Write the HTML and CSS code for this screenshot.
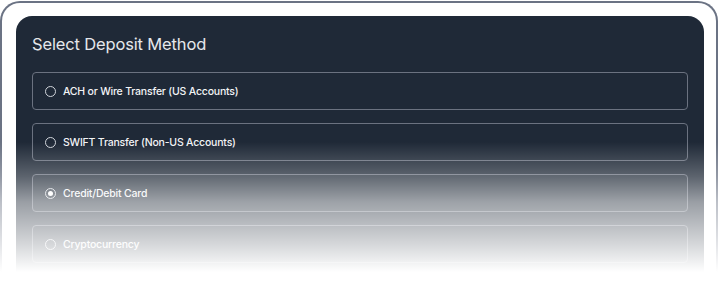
FILE: index.html
```html
<!DOCTYPE html>
<html>
<head>
<meta charset="utf-8">
<link rel="stylesheet" href="styles.css">
</head>
<body>
<div class="frame">
  <div class="card">
    <h2 class="title">Select Deposit Method</h2>
    <div class="options">
      <label class="option"><span class="radio"></span><span class="label">ACH or Wire Transfer (US Accounts)</span></label>
      <label class="option"><span class="radio"></span><span class="label">SWIFT Transfer (Non-US Accounts)</span></label>
      <label class="option selected"><span class="radio"></span><span class="label">Credit/Debit Card</span></label>
      <label class="option"><span class="radio"></span><span class="label">Cryptocurrency</span></label>
    </div>
  </div>
</div>
<div class="fade"></div>
</body>
</html>
```

FILE: styles.css
```css
html, body {
  margin: 0;
  padding: 0;
  background: #ffffff;
  width: 720px;
  height: 296px;
  overflow: hidden;
  font-family: Inter, "Liberation Sans", sans-serif;
}
.frame {
  margin-top: 1px;
  width: 718px;
  height: 294px;
  border: 2px solid #6b7384;
  border-bottom: none;
  border-radius: 20px 20px 0 0;
  padding: 13px 0 0 14px;
  box-sizing: border-box;
  background: #ffffff;
}
.card {
  width: 688px;
  height: 281px;
  background: #1f2937;
  border-radius: 16px 16px 0 0;
  padding: 16px 16px 0 16px;
  box-sizing: border-box;
}
.title {
  margin: 0;
  font-size: 16.5px;
  line-height: 25px;
  font-weight: 400;
  color: #e5e7eb;
  letter-spacing: -0.15px;
}
.options {
  margin-top: 15px;
  display: flex;
  flex-direction: column;
  gap: 13px;
}
.option {
  height: 38px;
  box-sizing: border-box;
  border: 1px solid #6b7280;
  border-radius: 4px;
  display: flex;
  align-items: center;
  padding-left: 12px;
  gap: 7px;
}
.radio {
  width: 11px;
  height: 11px;
  box-sizing: border-box;
  border: 1px solid #d1d5db;
  border-radius: 50%;
  display: flex;
  align-items: center;
  justify-content: center;
}
.selected .radio::after {
  content: "";
  width: 5px;
  height: 5px;
  border-radius: 50%;
  background: #ffffff;
}
.selected {
  background: rgba(255,255,255,0.04);
}
.label {
  font-size: 10.5px;
  font-weight: 500;
  color: #f3f4f6;
  letter-spacing: -0.2px;
}
.fade {
  position: absolute;
  left: 0;
  top: 142px;
  width: 720px;
  height: 154px;
  background: linear-gradient(to bottom,
    rgba(255,255,255,0) 0px,
    rgba(255,255,255,0.28) 35px,
    rgba(255,255,255,0.55) 60px,
    rgba(255,255,255,0.82) 103px,
    rgba(255,255,255,1) 130px);
}
```
